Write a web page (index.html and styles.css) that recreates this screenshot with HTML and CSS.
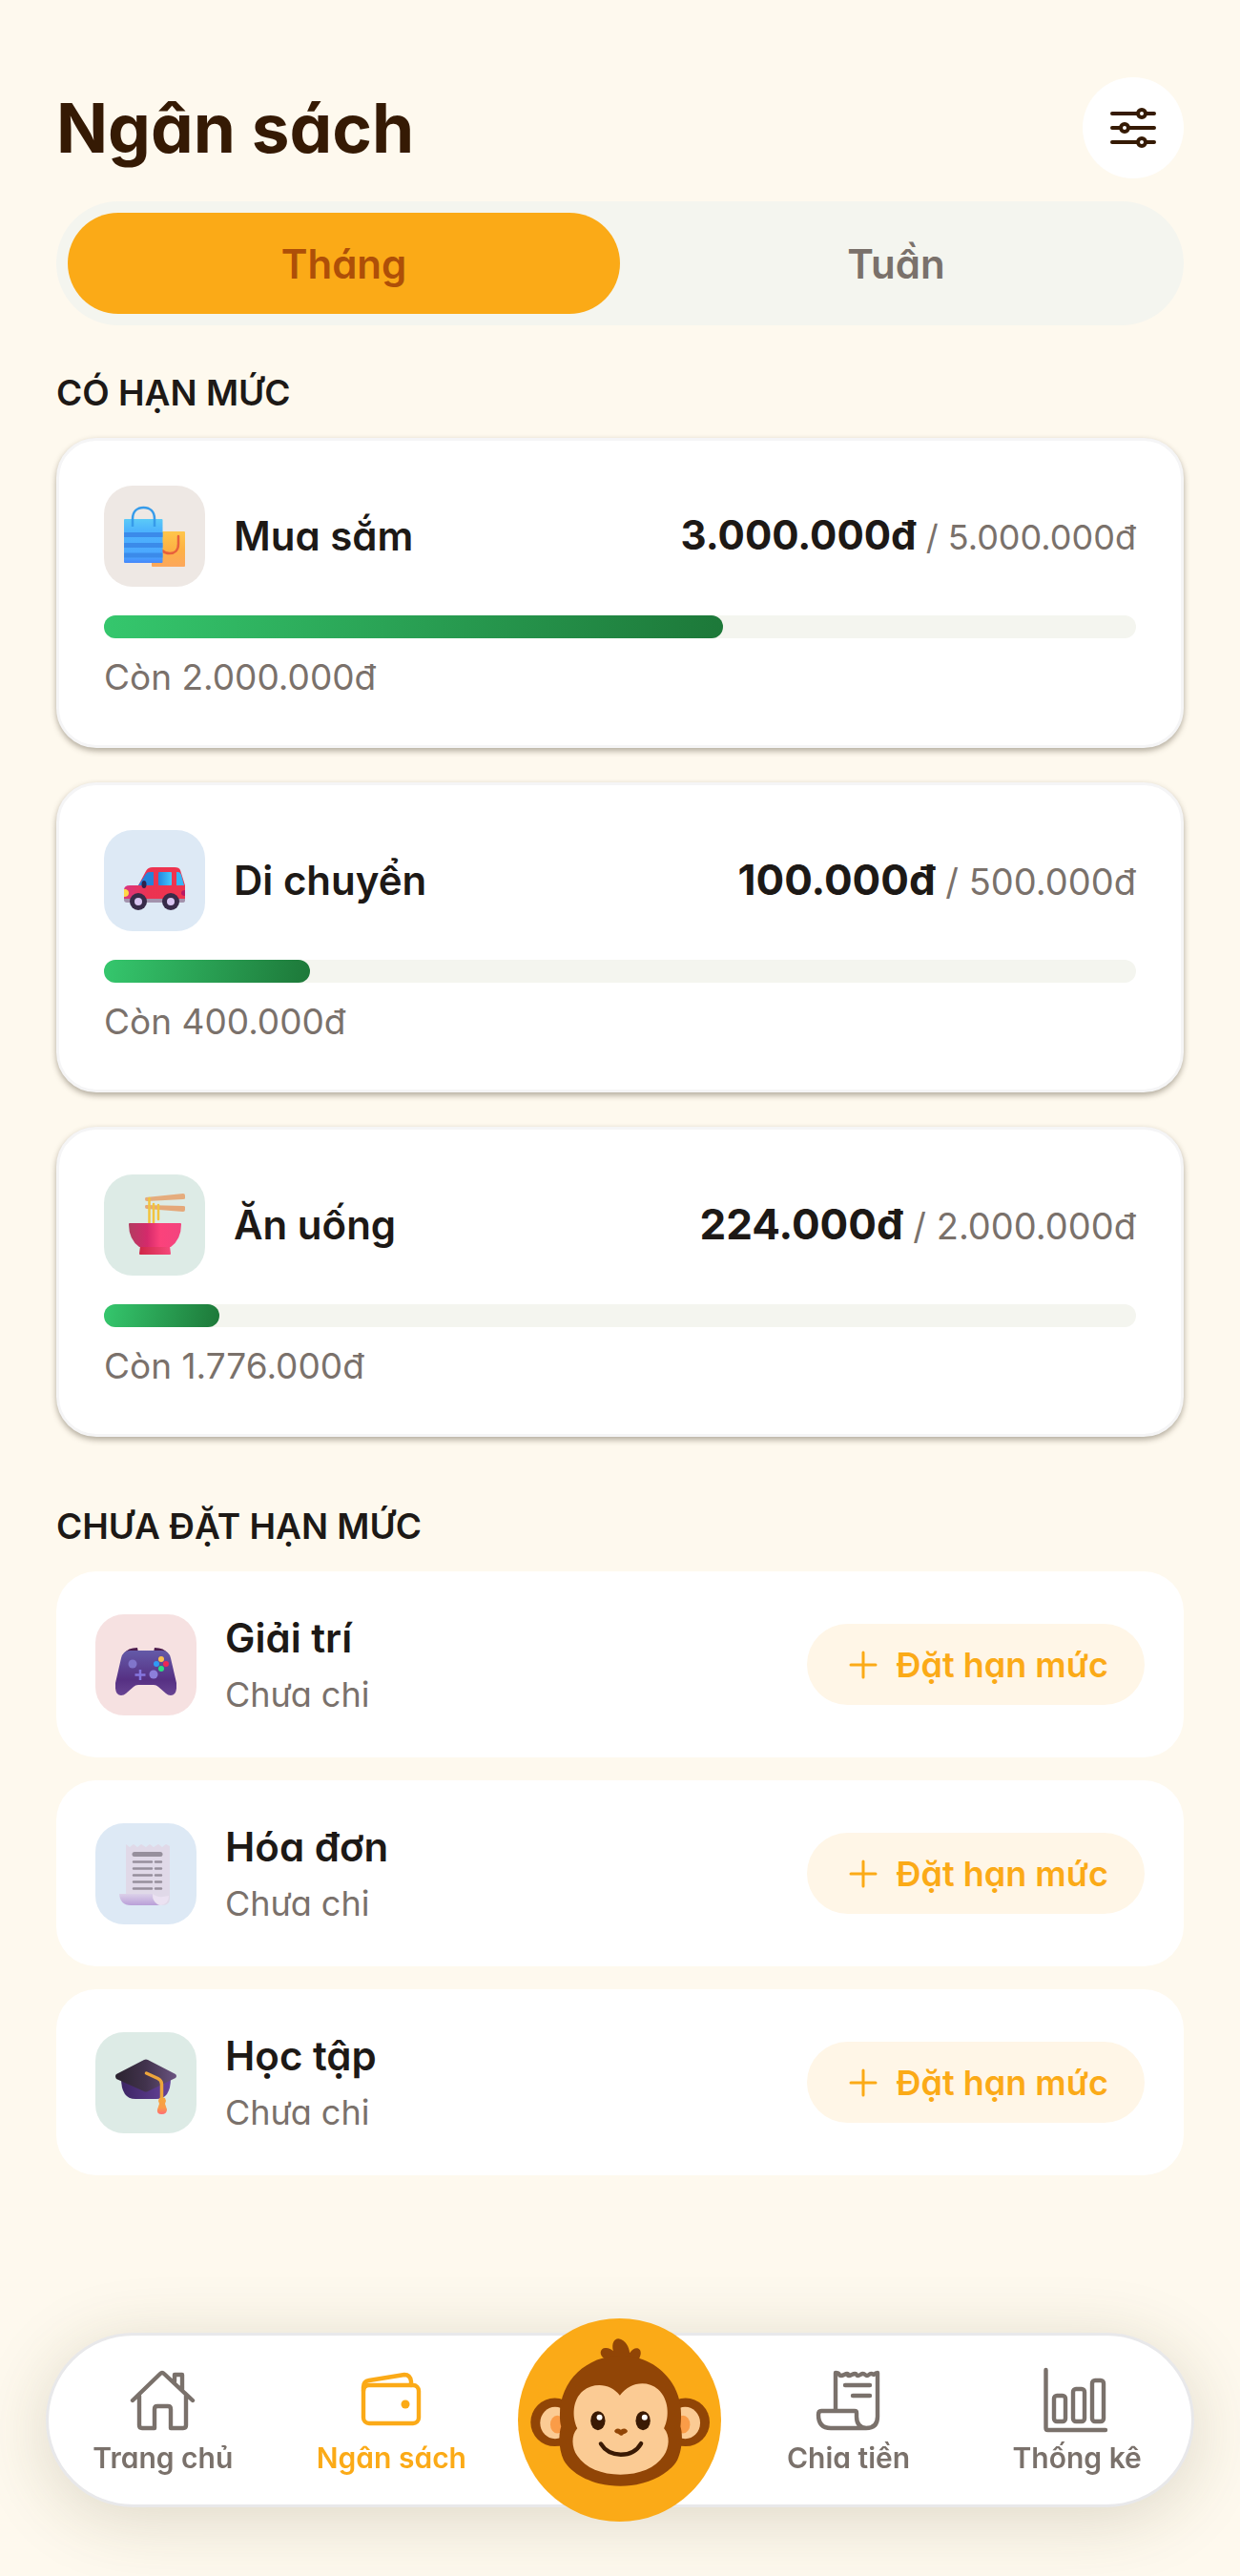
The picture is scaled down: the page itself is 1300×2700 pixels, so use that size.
FILE: index.html
```html
<!DOCTYPE html>
<html lang="vi">
<head>
  <meta charset="UTF-8">
  <meta name="viewport" content="width=device-width, initial-scale=1.0">
  <title>Ngân sách</title>
  <link rel="stylesheet" href="styles.css">
</head>
<body>
  <main class="page">
    <header class="header">
      <h1>Ngân sách</h1>
      <button class="filter-btn" type="button" aria-label="Bộ lọc">
        <svg width="54" height="54" viewBox="0 0 54 54" fill="none" stroke="#351a04" stroke-width="4" stroke-linecap="round">
          <path d="M5 12h27M41 12h8M5 27h8M22 27h27M5 42h27M41 42h8"/>
          <circle cx="36" cy="12" r="4"/>
          <circle cx="18" cy="27" r="4"/>
          <circle cx="36" cy="42" r="4"/>
        </svg>
      </button>
    </header>

    <div class="tabs">
      <button class="tab active" type="button">Tháng</button>
      <button class="tab" type="button">Tuần</button>
    </div>

    <section class="limited">
      <h2>CÓ HẠN MỨC</h2>
      <div class="budget-list">
        <article class="budget-card">
          <div class="budget-top">
            <div class="icon icon-sand">
              <svg width="64" height="64" viewBox="0 0 64 64">
                <defs>
                  <linearGradient id="bagBlue" x1="0" y1="0" x2="0" y2="1"><stop offset="0" stop-color="#5bcaf7"/><stop offset=".25" stop-color="#4db4fd"/><stop offset=".85" stop-color="#4ba6ff"/><stop offset="1" stop-color="#4587fb"/></linearGradient>
                  <linearGradient id="bagGold" x1="0" y1="0" x2="0" y2="1"><stop offset="0" stop-color="#ffc64b"/><stop offset=".5" stop-color="#fdb144"/><stop offset="1" stop-color="#fca75c"/></linearGradient>
                </defs>
                <rect x="29" y="27" width="35" height="37" rx="1" fill="url(#bagGold)"/>
                <path d="M57 32v8c0 7-4 10-9 10-3 0-6-1-8-3" fill="none" stroke="#e8603c" stroke-width="2.5" stroke-linecap="round"/>
                <rect y="14" width="40.500" height="46" rx="1" fill="url(#bagBlue)"/>
                <path d="M0 28h40.500v5H0zM0 39h40.500v5H0zM0 49.500h40.500v5H0z" fill="#3b8bea"/>
                <path d="M9 22v-8C9 6 14 2 20.500 2S32 6 32 14v8" fill="none" stroke="#369bea" stroke-width="2.500"/>
              </svg>
            </div>
            <h3>Mua sắm</h3>
            <p class="amount amount-long"><strong>3.000.000đ</strong> / 5.000.000đ</p>
          </div>
          <div class="bar"><div class="bar-fill" style="width: 60%"></div></div>
          <p class="note">Còn 2.000.000đ</p>
        </article>

        <article class="budget-card">
          <div class="budget-top">
            <div class="icon icon-blue">
              <svg width="64" height="64" viewBox="0 0 64 64">
                <defs>
                  <linearGradient id="carBody"><stop offset="0" stop-color="#d9357f"/><stop offset=".4" stop-color="#ec3351"/><stop offset="1" stop-color="#ef344e"/></linearGradient>
                  <linearGradient id="carGlass"><stop offset="0" stop-color="#2387df"/><stop offset="1" stop-color="#45c9ff"/></linearGradient>
                </defs>
                <path d="M0 50h64v3q0 2-3 2H3q-3 0-3-3z" fill="#a393ad"/>
                <path d="M0 51V42q0-5 6-5h9L23 22q2-4 7-4h23q5 0 6 3l5 16v14z" fill="url(#carBody)"/>
                <path d="M15 37l8-12q1-2 4-2h4v14z" fill="#2483da"/>
                <rect x="36" y="23" width="14" height="14" rx="1" fill="url(#carGlass)"/>
                <path d="M55 37V23h2q2 0 3 3l3 11z" fill="#36b5f5"/>
                <ellipse cx="21" cy="36" rx="2.500" ry="4" fill="#31204b"/>
                <path d="M0 41h2q3 1 3 4 0 4-5 4z" fill="#ffd847"/>
                <path d="M64 42q-4 0-4 3t4 3z" fill="#b71963"/>
                <circle cx="15" cy="54" r="9" fill="#382b49"/>
                <circle cx="49" cy="54" r="9" fill="#382b49"/>
                <circle cx="15" cy="54" r="4" fill="#d8c4f0"/>
                <circle cx="49" cy="54" r="4" fill="#d8c4f0"/>
              </svg>
            </div>
            <h3>Di chuyển</h3>
            <p class="amount"><strong>100.000đ</strong> / 500.000đ</p>
          </div>
          <div class="bar"><div class="bar-fill" style="width: 20%"></div></div>
          <p class="note">Còn 400.000đ</p>
        </article>

        <article class="budget-card">
          <div class="budget-top">
            <div class="icon icon-green">
              <svg width="64" height="66" viewBox="0 0 64 66">
                <defs>
                  <linearGradient id="bowl"><stop offset="0" stop-color="#b23c60"/><stop offset=".35" stop-color="#d42a6b"/><stop offset=".6" stop-color="#fb427b"/><stop offset="1" stop-color="#f3447e"/></linearGradient>
                  <linearGradient id="foot"><stop offset="0" stop-color="#ce2747"/><stop offset="1" stop-color="#f6497b"/></linearGradient>
                </defs>
                <path d="M23 4L62 0q2 0 2 2v3q0 1-2 1L24 8q-2 0-2-2t1-2z" fill="#e5ac7d"/>
                <path d="M23 12l39 1q2 0 2 1v3q0 2-2 2l-38-3q-2 0-2-2t1-2z" fill="#e5a879"/>
                <path d="M26.500 5v27M31 11v21M36 12v15" stroke="#f2c43e" stroke-width="2.500" stroke-linecap="round"/>
                <path d="M17 55h31l1 8q0 1-1 1H17q-1 0-1-1z" fill="url(#foot)"/>
                <path d="M6 31h53q1 0 1 1 0 16-11 24H16Q5 48 5 32q0-1 1-1z" fill="url(#bowl)"/>
              </svg>
            </div>
            <h3>Ăn uống</h3>
            <p class="amount"><strong>224.000đ</strong> / 2.000.000đ</p>
          </div>
          <div class="bar"><div class="bar-fill" style="width: 11.2%"></div></div>
          <p class="note">Còn 1.776.000đ</p>
        </article>
      </div>
    </section>

    <section class="unlimited">
      <h2>CHƯA ĐẶT HẠN MỨC</h2>
      <div class="row-list">
        <article class="row-card">
          <div class="icon icon-pink">
            <svg width="64" height="66" viewBox="0 0 64 66">
              <defs>
                <linearGradient id="pad" x1="0" y1="0" x2="0" y2="1"><stop offset="0" stop-color="#645aa8"/><stop offset=".65" stop-color="#563083"/><stop offset="1" stop-color="#684493"/></linearGradient>
              </defs>
              <path d="M9 21q4-6 14-6l1 5zM55 21q-4-6-14-6l-1 5z" fill="#4c1c4e"/>
              <path d="M15 18h34q7 0 9 8l6 26q1 13-6 13-3 0-5-2l-8-7q-2-2-5-2H24q-3 0-5 2l-8 7q-2 2-5 2-7 0-6-13L6 26q2-8 9-8z" fill="url(#pad)"/>
              <circle cx="18" cy="32" r="4.500" fill="#8075cb"/>
              <circle cx="40" cy="43" r="4.500" fill="#8c7fda"/>
              <path d="M26 38v11M20.500 43.500h11" stroke="#8576df" stroke-width="2.500"/>
              <circle cx="48" cy="27" r="3" fill="#fbc04f"/>
              <circle cx="43" cy="32" r="3" fill="#2f9bf5"/>
              <circle cx="53" cy="32" r="3" fill="#ee2754"/>
              <circle cx="48" cy="37" r="3" fill="#2adf83"/>
            </svg>
          </div>
          <div class="row-text">
            <h3>Giải trí</h3>
            <p>Chưa chi</p>
          </div>
          <button class="set-btn" type="button">
            <svg width="30" height="30" viewBox="0 0 30 30"><path d="M2 15h26M15 2v26" stroke="#fbaa17" stroke-width="3" stroke-linecap="round"/></svg>
            Đặt hạn mức
          </button>
        </article>

        <article class="row-card">
          <div class="icon icon-blue">
            <svg width="64" height="66" viewBox="0 0 64 66">
              <defs>
                <linearGradient id="roll" x1="0" y1="0" x2="0" y2="1"><stop offset="0" stop-color="#dcd1e9"/><stop offset="1" stop-color="#b99fd8"/></linearGradient>
              </defs>
              <path d="M11 2l4 3 4-3 4 3 4-3 5 3 4-3 4 3 5-3 4 3 4-3 4 2v55q0 7-8 7H24L11 56z" fill="#e0d9e8"/>
              <path d="M4 54h35v4q2 6 7 8H16Q5 66 4 54z" fill="url(#roll)"/>
              <path d="M39 54q5 5 17 2 0 8-8 10-9-2-9-12z" fill="#ebe2f2"/>
              <path d="M20 12.500h27" stroke="#968f9c" stroke-width="5" stroke-linecap="round"/>
              <path d="M19 20.500h19M42 20.500h6M19 27.500h19M42 27.500h6M19 34.500h19M42 34.500h6M19 41.500h19M42 41.500h6M19 48.500h19M42 48.500h6" stroke="#968f9c" stroke-width="2.500" stroke-linecap="round"/>
            </svg>
          </div>
          <div class="row-text">
            <h3>Hóa đơn</h3>
            <p>Chưa chi</p>
          </div>
          <button class="set-btn" type="button">
            <svg width="30" height="30" viewBox="0 0 30 30"><path d="M2 15h26M15 2v26" stroke="#fbaa17" stroke-width="3" stroke-linecap="round"/></svg>
            Đặt hạn mức
          </button>
        </article>

        <article class="row-card">
          <div class="icon icon-green">
            <svg width="64" height="66" viewBox="0 0 64 66">
              <defs>
                <linearGradient id="board"><stop offset="0" stop-color="#2b2330"/><stop offset=".5" stop-color="#42334d"/><stop offset="1" stop-color="#6b5481"/></linearGradient>
                <linearGradient id="capBase"><stop offset="0" stop-color="#3c2563"/><stop offset="1" stop-color="#66439b"/></linearGradient>
                <linearGradient id="tassel" x1="0" y1="0" x2="0" y2="1"><stop offset="0" stop-color="#f5a63c"/><stop offset=".6" stop-color="#fb9b49"/><stop offset="1" stop-color="#ff6d75"/></linearGradient>
              </defs>
              <path d="M6 28h52q0 22-15 22H21Q6 50 6 28z" fill="url(#capBase)"/>
              <path d="M1 24L30 9q2-1 4 0l29 15q2 2 0 4L34 42q-2 1-4 0L1 29q-2-3 0-5z" fill="url(#board)"/>
              <path d="M32.500 23l12 5.500q4 2 4 6V51" fill="none" stroke="#eda53b" stroke-width="3.500" stroke-linecap="round"/>
              <path d="M46 49q3-1 6 0l1 3-1 3 2 6q0 5-5.500 5T44 61l2-6-1-3z" fill="url(#tassel)"/>
            </svg>
          </div>
          <div class="row-text">
            <h3>Học tập</h3>
            <p>Chưa chi</p>
          </div>
          <button class="set-btn" type="button">
            <svg width="30" height="30" viewBox="0 0 30 30"><path d="M2 15h26M15 2v26" stroke="#fbaa17" stroke-width="3" stroke-linecap="round"/></svg>
            Đặt hạn mức
          </button>
        </article>
      </div>
    </section>
  </main>

  <nav class="nav">
    <a class="nav-item" href="#">
      <svg class="nav-icon" viewBox="0 0 72 72">
        <path d="M4 37L33 9q2-2 4 0l30 28M11 32v31q0 3 3 3h13V46q0-3 3-3h11q3 0 3 3v20h13q3 0 3-3V32M48 17v-7h8v16"/>
      </svg>
      Trang chủ
    </a>
    <a class="nav-item active" href="#">
      <svg class="nav-icon" viewBox="0 0 72 72">
        <rect x="7" y="21" width="58" height="40" rx="6"/>
        <path d="M7 27v-4q0-6 6-7l37-6q6 0 7 7v4"/>
        <circle class="dot" cx="51" cy="41" r="4.500"/>
      </svg>
      Ngân sách
    </a>
    <a class="nav-main" href="#" aria-label="Trợ lý">
      <svg viewBox="70 60 640 640">
        <circle cx="390" cy="380" r="320" fill="#fbaa17"/>
        <circle cx="186" cy="387" r="76" fill="#914506"/>
        <circle cx="598" cy="387" r="76" fill="#914506"/>
        <ellipse cx="187" cy="389" rx="47" ry="50" fill="#fbcb94"/>
        <ellipse cx="597" cy="389" rx="47" ry="50" fill="#fbcb94"/>
        <ellipse cx="194" cy="394" rx="22" ry="28" fill="#fa9c48"/>
        <ellipse cx="590" cy="394" rx="22" ry="28" fill="#fa9c48"/>
        <path d="M345 188c-22-12-17-36 2-35 10 0 18 4 23 10-6-25 4-40 17-39 22 3 34 28 35 45 9-13 18-17 27-14 12 6 8 23 3 31z" fill="#914506"/>
        <path d="M393 177c105 0 191 78 191 187 0 15-1 27-2 36 9 30 4 77-10 106-30 52-105 82-179 82s-149-30-179-82c-14-29-18-76-8-106-3-9-4-21-4-36 0-109 86-187 191-187z" fill="#914506"/>
        <path d="M391 303c-27-38-81-43-116-15-34 28-35 83-18 118-20 22-18 60 0 87 26 39 77 59 136 59s110-20 136-59c18-27 21-64 1-87 18-36 16-92-19-123-36-30-91-21-120 20z" fill="#fbcb94"/>
        <ellipse cx="322" cy="382" rx="23" ry="30" fill="#3a1a04"/>
        <ellipse cx="464" cy="382" rx="23" ry="30" fill="#3a1a04"/>
        <circle cx="327" cy="372" r="9" fill="#fff"/>
        <circle cx="469" cy="372" r="9" fill="#fff"/>
        <path d="M377 410q8-6 17 1 11-7 18-1 8 6-3 12-7 1-10 6-6 3-10-2-4-4-10-5-9-5-2-11z" fill="#914506"/>
        <path d="M331 455q20 33 63 34 44 0 64-35" fill="none" stroke="#3a1a04" stroke-width="13" stroke-linecap="round"/>
      </svg>
    </a>
    <a class="nav-item" href="#">
      <svg class="nav-icon" viewBox="0 0 72 72">
        <path d="M22 47V8q3 0 4 2t5 0 4 0 4 0 5 0 4 0 5 0 4 0 5 0q2-2 4-2v46q0 12-12 12-10-1-10-12v-4q0-2-2-2H7q-3 0-3 4 0 14 13 14h37M32 21h26M40 32h18"/>
      </svg>
      Chia tiền
    </a>
    <a class="nav-item" href="#">
      <svg class="nav-icon" viewBox="0 0 72 72">
        <path d="M3.500 5v61q0 2 2 2H66"/>
        <rect x="12" y="32" width="12" height="27" rx="3"/>
        <rect x="32" y="25" width="12" height="34" rx="3"/>
        <rect x="52" y="16" width="12" height="43" rx="3"/>
      </svg>
      Thống kê
    </a>
  </nav>
</body>
</html>
```
FILE: styles.css
```css
* {
  box-sizing: border-box;
}
body {
  margin: 0;
  min-height: 100vh;
  background: #fef9ee;
  color: #1d1916;
  font-family: Inter, "Open Sans", sans-serif;
  /* cv11 = single-storey a */
  font-feature-settings: "cv11";
}
h1, h2, h3, p {
  margin: 0;
}
button {
  border: 0;
  padding: 0;
  font: inherit;
  font-feature-settings: inherit;
  cursor: pointer;
}
svg {
  display: block;
  flex: none;
}

.page {
  padding: 81px 59px 420px;
}
.header {
  display: flex;
  align-items: center;
  justify-content: space-between;
}
h1 {
  font-size: 71px;
  line-height: 88px;
  font-weight: 700;
  color: #351a04;
}
.filter-btn {
  display: flex;
  align-items: center;
  justify-content: center;
  width: 106px;
  height: 106px;
  border-radius: 50%;
  background: #fff;
}

.tabs {
  display: flex;
  margin-top: 24px;
  padding: 12px;
  border-radius: 65px;
  background: #f4f5ef;
}
.tab {
  flex: 1;
  height: 106px;
  border-radius: 53px;
  background: transparent;
  color: #7a716b;
  font-size: 42px;
  font-weight: 600;
}
.tab.active {
  background: #fbaa17;
  color: #ae4f08;
}

h2 {
  font-size: 37px;
  line-height: 48px;
  font-weight: 600;
}
h3 {
  font-size: 42px;
  line-height: 54px;
  font-weight: 600;
}
.limited {
  margin-top: 47px;
}
.unlimited {
  margin-top: 70px;
}

.icon {
  display: flex;
  align-items: center;
  justify-content: center;
  flex: none;
  width: 106px;
  height: 106px;
  border-radius: 30px;
}
.icon-sand { background: #eee8e4; }
.icon-blue { background: #dde9f5; }
.icon-green { background: #ddebe6; }
.icon-pink { background: #f6e1e1; }

.budget-list {
  display: flex;
  flex-direction: column;
  gap: 36px;
  margin-top: 23px;
}
.budget-card {
  padding: 47px 47px 46px;
  border: 3px solid #f5f5f6;
  border-radius: 42px;
  background: #fff;
  box-shadow: 0 3px 6px rgba(60, 50, 30, 0.4);
}
.budget-top {
  display: flex;
  align-items: center;
  gap: 30px;
}
.amount {
  margin-left: auto;
  color: #7a716b;
  font-size: 38px;
  line-height: 54px;
  white-space: nowrap;
}
.amount strong {
  color: #1d1916;
  font-size: 44px;
  font-weight: 700;
}
/* two seven-digit sums on one line */
.amount-long {
  font-size: 36px;
}
.amount-long strong {
  font-size: 42px;
}
.bar {
  margin-top: 30px;
  height: 24px;
  border-radius: 12px;
  background: #f4f5ef;
}
.bar-fill {
  height: 100%;
  border-radius: 12px;
  background: linear-gradient(100deg, #35c76d, #1d7839);
}
.note {
  margin-top: 16px;
  color: #7a716b;
  font-size: 37px;
  line-height: 50px;
}

.row-list {
  display: flex;
  flex-direction: column;
  gap: 24px;
  margin-top: 23px;
}
.row-card {
  display: flex;
  align-items: center;
  gap: 30px;
  padding: 43px 41px;
  border-radius: 42px;
  background: #fff;
}
.row-text p {
  margin-top: 9px;
  color: #7a716b;
  font-size: 36px;
  line-height: 46px;
}
.set-btn {
  display: flex;
  align-items: center;
  gap: 20px;
  margin-left: auto;
  height: 85px;
  padding: 0 38px 0 44px;
  border-radius: 43px;
  background: #fff6e7;
  color: #fbaa17;
  font-size: 36px;
  font-weight: 600;
  white-space: nowrap;
}

.nav {
  position: fixed;
  left: 48px;
  right: 48px;
  bottom: 72px;
  display: grid;
  grid-template-columns: repeat(5, 1fr);
  align-items: center;
  height: 183px;
  border: 3px solid #e8e8ea;
  border-radius: 92px;
  background: #fff;
  box-shadow: 0 12px 72px rgba(70, 65, 30, 0.18);
}
.nav-item {
  display: flex;
  flex-direction: column;
  align-items: center;
  gap: 6px;
  color: #7a716b;
  font-size: 30px;
  line-height: 38px;
  font-weight: 600;
  text-decoration: none;
  white-space: nowrap;
}
.nav-item.active {
  color: #fbaa17;
}
.nav-icon {
  width: 72px;
  height: 72px;
  fill: none;
  stroke: currentColor;
  stroke-width: 4.4;
  stroke-linecap: round;
  stroke-linejoin: round;
}
.nav-icon .dot {
  fill: currentColor;
  stroke: none;
}
.nav-main {
  justify-self: center;
  width: 213px;
  height: 213px;
  margin: -18px 0;
}
```
